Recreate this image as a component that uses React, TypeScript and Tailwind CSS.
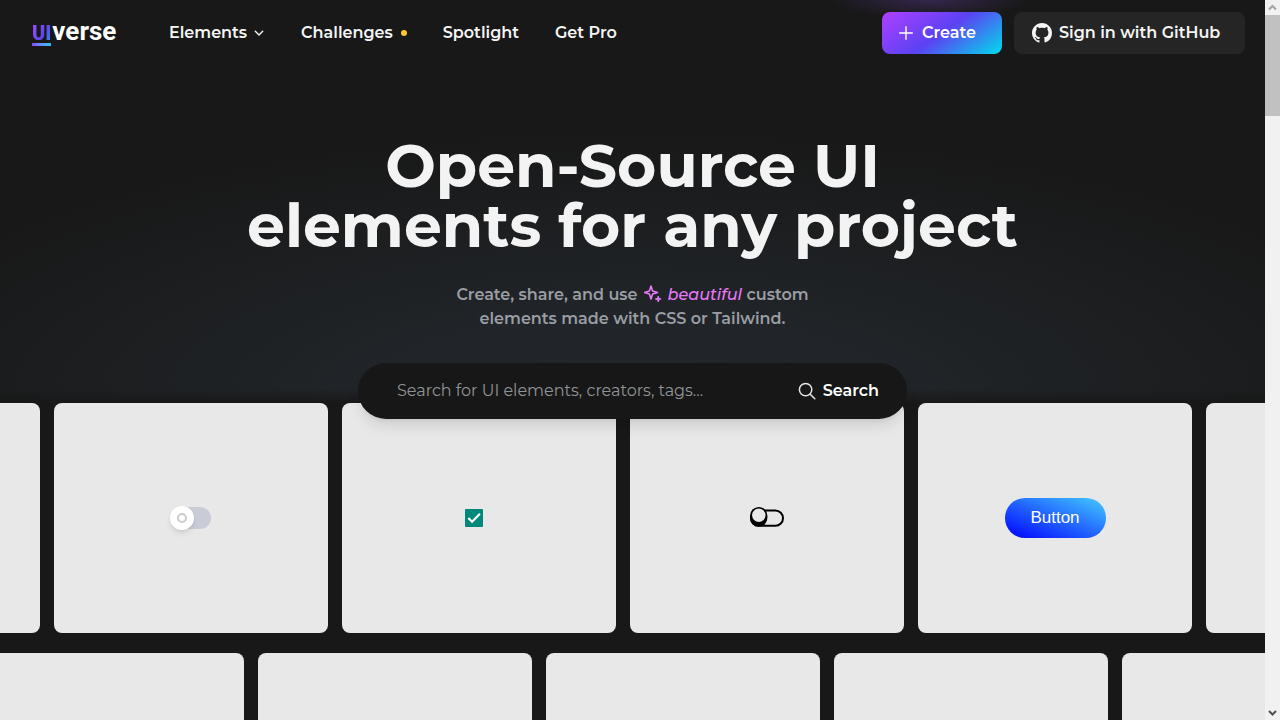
import React from 'react';

const navLink = 'flex items-center text-[#f5f5f5] hover:text-white';

function Logo() {
  return (
    <a href="#home" aria-label="uiverse" className="flex w-[86px] shrink-0 items-baseline pb-[2px] font-['Roboto',sans-serif] font-bold text-white">
      <span className="flex flex-col gap-[2px]">
        <span className="bg-[linear-gradient(120deg,#a04dff,#5f45f0_60%,#2f8df5)] bg-clip-text text-xl leading-4 font-black text-transparent">UI</span>
        <span className="h-[3px] w-[19px] bg-linear-to-r from-[#7a4cff] to-[#18c4f0]" />
      </span>
      <span className="ml-px text-[26px] leading-6">verse</span>
    </a>
  );
}

function GitHubMark() {
  return (
    <svg viewBox="0 0 16 16" className="size-5" fill="currentColor" aria-hidden="true">
      <path d="M8 0C3.58 0 0 3.58 0 8c0 3.54 2.29 6.53 5.47 7.59.4.07.55-.17.55-.38 0-.19-.01-.82-.01-1.49-2.01.37-2.53-.49-2.69-.94-.09-.23-.48-.94-.82-1.13-.28-.15-.68-.52-.01-.53.63-.01 1.08.58 1.23.82.72 1.21 1.87.87 2.33.66.07-.52.28-.87.51-1.07-1.78-.2-3.64-.89-3.64-3.95 0-.87.31-1.59.82-2.15-.08-.2-.36-1.02.08-2.12 0 0 .67-.21 2.2.82.64-.18 1.32-.27 2-.27s1.36.09 2 .27c1.53-1.04 2.2-.82 2.2-.82.44 1.1.16 1.92.08 2.12.51.56.82 1.27.82 2.15 0 3.07-1.87 3.75-3.65 3.95.29.25.54.73.54 1.48 0 1.07-.01 1.93-.01 2.2 0 .21.15.46.55.38A8.01 8.01 0 0 0 16 8c0-4.42-3.58-8-8-8z" />
    </svg>
  );
}

function Header() {
  return (
    <header className="flex h-[66px] items-center pr-5 pl-8 text-base font-semibold">
      <Logo />
      <nav className="ml-[51px] flex items-center gap-9" aria-label="Main">
        <a href="#elements" className={navLink}>
          Elements
          <svg viewBox="0 0 10 10" className="ml-[7px] mr-px size-[10px]" fill="none" stroke="currentColor" strokeWidth="1.4" strokeLinecap="round" strokeLinejoin="round" aria-hidden="true">
            <path d="M1.3 3.3 5 7l3.7-3.7" />
          </svg>
        </a>
        <a href="#challenges" className={navLink}>
          Challenges
          <span className="ml-2 size-[6px] rounded-full bg-[#ffc730]" />
        </a>
        <a href="#spotlight" className={navLink}>Spotlight</a>
        <a href="#pro" className={navLink}>Get Pro</a>
      </nav>
      <div className="ml-auto flex items-center gap-3">
        <button type="button" className="flex h-[42px] w-[120px] items-center gap-2 rounded-lg bg-[linear-gradient(145deg,#af40ff,#5b42f3_50%,#00ddeb)] pl-4 text-white">
          <svg viewBox="0 0 16 16" className="size-4" fill="none" stroke="currentColor" strokeWidth="1.4" strokeLinecap="round" aria-hidden="true">
            <path d="M8 1.7v12.6M1.7 8h12.6" />
          </svg>
          Create
        </button>
        <button type="button" className="flex h-[42px] w-[231px] items-center gap-[7px] rounded-lg bg-[#252525] pl-[18px] text-[#f5f5f5]">
          <GitHubMark />
          Sign in with GitHub
        </button>
      </div>
    </header>
  );
}

function Sparkles() {
  return (
    <svg viewBox="0 0 18 18" className="mr-[6px] ml-[6px] mb-1 inline size-[18px]" fill="none" stroke="currentColor" strokeWidth="1.6" strokeLinejoin="round" aria-hidden="true">
      <path d="M7 1 8.6 5.9 13.5 7.5 8.6 9.1 7 14 5.4 9.1.5 7.5 5.4 5.9z" />
      <path d="m14.2 11 .8 2.2 2.2.8-2.2.8-.8 2.2-.8-2.2-2.2-.8 2.2-.8z" fill="currentColor" strokeWidth=".8" />
    </svg>
  );
}

function Hero() {
  return (
    <section className="flex flex-col items-center pt-[70px] text-center">
      <h1 className="text-[60px] leading-[60px] font-bold text-[#f3f3f3]">
        Open-Source UI
        <br />
        elements for any project
      </h1>
      <p className="mt-[27px] text-base leading-6 font-semibold text-[#9a9da3]">
        Create, share, and use
        <span className="text-[#e879f9]"><Sparkles /><em className="font-medium">beautiful</em></span> custom
        <br />
        elements made with CSS or Tailwind.
      </p>
      <form role="search" className="relative z-10 mt-8 -mb-4 flex h-14 w-full max-w-[549px] items-center rounded-full bg-[#171717] pr-7 pl-[39px] shadow-lg">
        <input type="search" aria-label="Search for UI elements, creators, tags" placeholder="Search for UI elements, creators, tags..." className="min-w-0 flex-1 bg-transparent text-base text-white outline-none placeholder:text-[#909497]" />
        <button type="submit" className="flex items-center gap-[7px] font-semibold text-white">
          <svg viewBox="0 0 18 18" className="size-[18px]" fill="none" stroke="#e5e5e5" strokeWidth="1.5" strokeLinecap="round" aria-hidden="true">
            <circle cx="7.6" cy="7.6" r="6.2" />
            <path d="m12.2 12.2 4.6 4.6" />
          </svg>
          Search
        </button>
      </form>
    </section>
  );
}

function Card({ children }: { children?: React.ReactNode }) {
  return <li className="flex h-[230px] w-[274px] shrink-0 items-center justify-center rounded-lg bg-[#e8e8e8]">{children}</li>;
}

function SoftSwitch() {
  return (
    <label className="flex h-[22px] w-[40px] items-center rounded-full bg-[#c9cbd6]">
      <input type="checkbox" role="switch" aria-label="Soft switch" className="peer sr-only" />
      <span className="-ml-[1px] flex size-6 shrink-0 items-center justify-center rounded-full bg-white shadow-md">
        <span className="size-[10px] rounded-full border-2 border-[#cccccc]" />
      </span>
    </label>
  );
}

function TealCheckbox() {
  return (
    <label className="mr-[10px] grid size-[18px] place-items-center rounded-[1px] bg-[#00897b]">
      <input type="checkbox" defaultChecked aria-label="Teal checkbox" className="peer sr-only" />
      <svg viewBox="0 0 18 18" className="size-[18px]" fill="none" stroke="#fff" strokeWidth="2.1" aria-hidden="true">
        <path d="m3.3 9 3.8 3.8 7.8-8" />
      </svg>
    </label>
  );
}

function OutlineSwitch() {
  return (
    <label className="block">
      <input type="checkbox" role="switch" aria-label="Outline switch" className="peer sr-only" />
      <svg viewBox="0 0 34 22" className="h-[22px] w-[34px]" aria-hidden="true">
        <rect x="1" y="3.6" width="32" height="15.2" rx="7.6" fill="none" stroke="#000" strokeWidth="2" />
        <rect x="0" y="0" width="17.4" height="19.8" rx="8.7" fill="#000" />
        <circle cx="8.8" cy="8.2" r="6.7" fill="#e8e8e8" />
      </svg>
    </label>
  );
}

function Showcase() {
  return (
    <section aria-label="Elements" className="flex flex-col gap-5 overflow-hidden bg-[#181818]">
      <ul className="-ml-[234px] flex gap-[14px]">
        <Card />
        <Card><SoftSwitch /></Card>
        <Card><TealCheckbox /></Card>
        <Card><OutlineSwitch /></Card>
        <Card>
          <button type="button" className="h-10 w-[101px] rounded-full bg-[linear-gradient(to_top_right,#0000ff,#44ccff)] font-['Liberation_Sans',sans-serif] text-[17px] text-white">Button</button>
        </Card>
        <Card />
      </ul>
      <ul className="-ml-[30px] flex gap-[14px]">
        <Card />
        <Card />
        <Card />
        <Card />
        <Card />
      </ul>
    </section>
  );
}

function Scrollbar() {
  return (
    <div className="flex w-[15px] shrink-0 flex-col items-center bg-[#f1f1f1]" aria-hidden="true">
      <svg viewBox="0 0 15 15" className="size-[15px] shrink-0" fill="none" stroke="#a3a3a3" strokeWidth="2"><path d="m4 9.5 3.5-3.5L11 9.5" /></svg>
      <span className="h-[101px] w-full bg-[#c1c1c1]" />
      <svg viewBox="0 0 15 15" className="mt-auto size-[15px] shrink-0" fill="none" stroke="#505050" strokeWidth="2"><path d="m4 6 3.5 3.5L11 6" /></svg>
    </div>
  );
}

export default function App() {
  return (
    <div className="flex h-screen overflow-hidden bg-[#181818] font-['Montserrat','Inter',sans-serif]">
      <main className="min-w-0 flex-1 overflow-hidden">
        <div className="bg-[linear-gradient(to_top,#181818,transparent_14px),radial-gradient(100px_18px_at_930px_0px,#34264c,transparent),radial-gradient(ellipse_65%_68%_at_50%_100%,#22262b,#212529_30%,#181818)]">
          <Header />
          <Hero />
        </div>
        <Showcase />
      </main>
      <Scrollbar />
    </div>
  );
}
